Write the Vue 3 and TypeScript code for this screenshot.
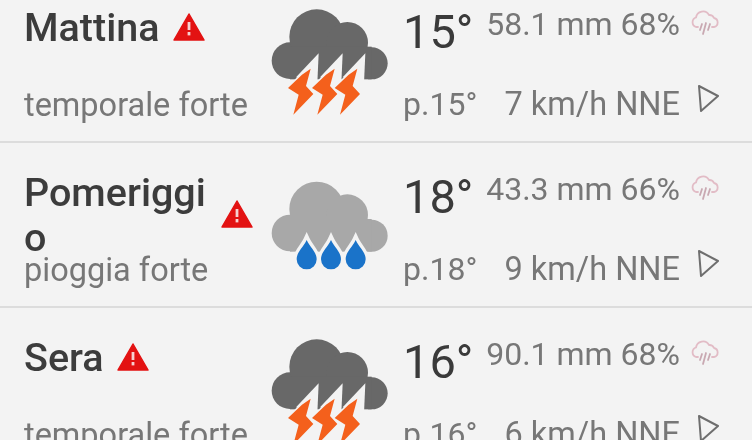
<template>
  <div class="forecast">
    <div v-for="row in rows" :key="row.name" class="row">
      <div class="label">
        <div class="name-line">
          <span class="name">{{ row.name }}</span>
          <svg class="warn" viewBox="0 0 32 28">
            <path d="M16 1 L31 27 H1 Z" fill="#e31212" stroke="#e31212" stroke-width="1.5" stroke-linejoin="round" />
            <rect x="14.6" y="9" width="2.8" height="8" fill="#f6d0d0" />
            <rect x="14.6" y="19" width="2.8" height="3.4" fill="#f6d0d0" />
          </svg>
        </div>
        <div class="desc">{{ row.desc }}</div>
      </div>

      <svg class="weather" :viewBox="row.rain ? '0 -15 420 390' : '0 0 420 390'">
        <g :fill="row.rain ? '#a8a8a8' : '#686868'" :transform="row.rain ? 'translate(0 7)' : undefined">
          <circle cx="90" cy="182" r="55" />
          <circle cx="170" cy="110" r="82" />
          <circle cx="262" cy="128" r="62" />
          <circle cx="335" cy="190" r="48" />
          <rect x="90" y="140" width="245" height="98" />
        </g>
        <template v-if="row.rain">
          <path
            v-for="x in [140, 213, 287]"
            :key="x"
            :d="`M${x} 210 C${x + 10} 232 ${x + 30} 246 ${x + 30} 268 A30 30 0 0 1 ${x - 30} 268 C${x - 30} 246 ${x - 10} 232 ${x} 210 Z`"
            fill="#1a73c9"
            stroke="#f3f3f3"
            stroke-width="20"
            paint-order="stroke"
          />
        </template>
        <template v-else>
          <g v-for="dx in [0, 72, 140]" :key="dx" :transform="`translate(${dx} 0)`">
            <path d="M176 160 L108 232 L172 250 Z" fill="#f3f3f3" />
            <path
              d="M126 224 L152 206 L138 258 L160 282 L100 344 L116 284 L84 264 Z"
              fill="#f4601c"
              stroke="#f3f3f3"
              stroke-width="9"
              stroke-linejoin="round"
              paint-order="stroke"
            />
          </g>
        </template>
      </svg>

      <div class="values">
        <div class="line top">
          <span class="temp">{{ row.temp }}°</span>
          <span class="info rainfall">{{ row.rainfall }}</span>
          <svg class="small-icon" viewBox="0 0 30 26" fill="none" stroke="#e2bcc6" stroke-width="1.8" stroke-linecap="round" stroke-linejoin="round">
            <path d="M8 17 H6 A5 5 0 0 1 6 7.5 A7 7 0 0 1 19 5 A5 5 0 0 1 24 8 A4.6 4.6 0 0 1 24 17 H22" />
            <path d="M12 14 L10 20 M16 13 L13 24 M20 14 L18 20" stroke="#c9a9b2" />
          </svg>
        </div>
        <div class="line bottom">
          <span class="info">p.{{ row.temp }}°</span>
          <span class="info wind">{{ row.wind }}</span>
          <svg class="small-icon arrow" viewBox="0 0 24 28" fill="none" stroke="#6e6e6e" stroke-width="2" stroke-linejoin="round">
            <path d="M3 1 L22 11 L5 26 Z" />
          </svg>
        </div>
      </div>
    </div>
  </div>
</template>

<script setup lang="ts">
interface ForecastRow {
  name: string
  desc: string
  temp: number
  rainfall: string
  wind: string
  rain: boolean
}

const rows: ForecastRow[] = [
  { name: 'Mattina', desc: 'temporale forte', temp: 15, rainfall: '58.1 mm 68%', wind: '7 km/h NNE', rain: false },
  { name: 'Pomeriggio', desc: 'pioggia forte', temp: 18, rainfall: '43.3 mm 66%', wind: '9 km/h NNE', rain: true },
  { name: 'Sera', desc: 'temporale forte', temp: 16, rainfall: '90.1 mm 68%', wind: '6 km/h NNE', rain: false }
]
</script>

<style>
html,
body {
  margin: 0;
  background: #f3f3f3;
  overflow: hidden;
}
</style>

<style scoped>
.forecast {
  height: 440px;
  overflow: hidden;
  background: #f3f3f3;
  font-family: Roboto, sans-serif;
  filter: blur(0.5px);
}

.row {
  display: grid;
  grid-template-columns: 246px 140px 1fr;
  height: 163px;
  padding-left: 24px;
  border-bottom: 2px solid #dcdcdc;
}

.row:first-child {
  margin-top: -22px;
}

.label {
  display: flex;
  flex-direction: column;
  justify-content: space-between;
  height: 144px;
  padding-top: 27px;
  box-sizing: border-box;
}

.name-line {
  display: flex;
  align-items: center;
  gap: 13px;
}

.name {
  max-width: 184px;
  font-size: 39.5px;
  font-weight: 500;
  line-height: 45px;
  color: #3c3c3c;
  word-break: break-all;
}

.warn {
  flex: none;
  width: 32px;
  height: 28px;
  margin-bottom: 2px;
}

.desc {
  margin-top: -10px;
  font-size: 32.5px;
  line-height: 34px;
  color: #777;
}

.weather {
  width: 140px;
  height: 130px;
  margin: 22px 0 0 -10px;
}

.values {
  margin-left: -7px;
  width: 317px;
}

.line {
  display: flex;
  align-items: flex-start;
}

.top {
  height: 76px;
  padding-top: 27px;
}

.temp {
  font-size: 47px;
  line-height: 54px;
  color: #3a3a3a;
}

.info {
  font-size: 32px;
  line-height: 36px;
  color: #777;
}

.rainfall {
  margin-left: auto;
  margin-top: 1px;
}

.bottom {
  padding-top: 5px;
}

.wind {
  margin-left: auto;
  font-size: 32.5px;
}

.small-icon {
  flex: none;
  width: 30px;
  height: 26px;
  margin: 5px 0 0 10px;
}

.arrow {
  width: 24px;
  height: 28px;
  margin: -1px 0 0 16px;
}
</style>
